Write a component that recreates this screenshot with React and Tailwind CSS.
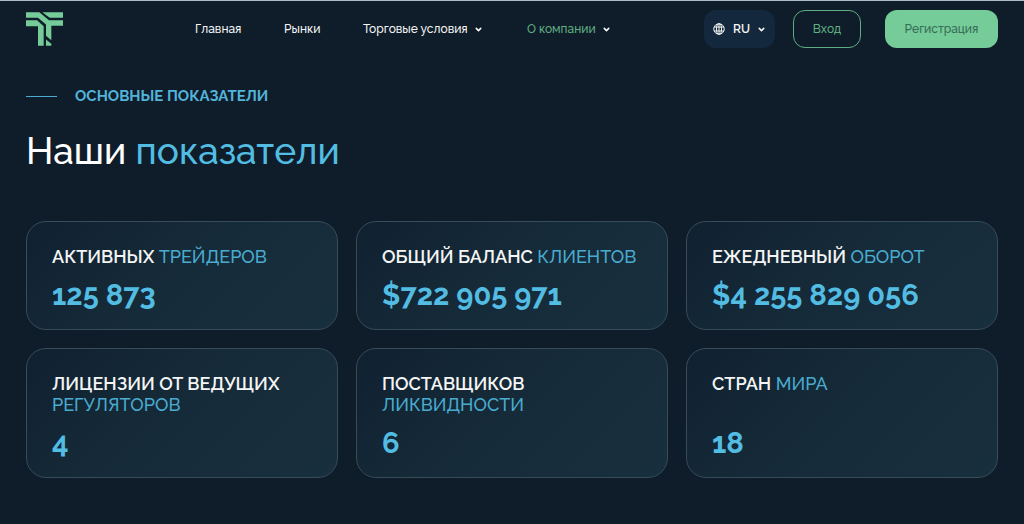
import React from 'react';
import { ChevronDown } from 'lucide-react';

const navItems = [
  { label: 'Главная', width: 'w-[89px]' },
  { label: 'Рынки', width: 'w-[79px]' },
  { label: 'Торговые условия', width: 'w-[164px]', menu: true },
  { label: 'О компании', width: 'w-[84px]', menu: true, active: true },
];

const stats = [
  { title: 'АКТИВНЫХ', accent: 'ТРЕЙДЕРОВ', value: '125 873' },
  { title: 'ОБЩИЙ БАЛАНС', accent: 'КЛИЕНТОВ', value: '$722 905 971' },
  { title: 'ЕЖЕДНЕВНЫЙ', accent: 'ОБОРОТ', value: '$4 255 829 056' },
  { title: 'ЛИЦЕНЗИИ ОТ ВЕДУЩИХ', accent: 'РЕГУЛЯТОРОВ', value: '4', stacked: true },
  { title: 'ПОСТАВЩИКОВ', accent: 'ЛИКВИДНОСТИ', value: '6', stacked: true },
  { title: 'СТРАН', accent: 'МИРА', value: '18' },
];

const Logo = () => (
  <svg viewBox="0 0 111 101" className="h-[34px] w-[37px]" fill="#75cc98" aria-hidden="true">
    <path d="M49 0H111V17H71Z" />
    <path d="M0 0H40L69 24H111V41H76V84L60 71V37L36 17H0Z" />
    <path d="M0 24H33L53 42V101H36V42H0Z" />
    <path d="M60 82L76 95V101H60Z" />
  </svg>
);

const Globe = () => (
  <svg viewBox="0 0 24 24" className="h-3 w-3" fill="none" stroke="currentColor" strokeWidth="2" aria-hidden="true">
    <circle cx="12" cy="12" r="10.5" />
    <ellipse cx="12" cy="12" rx="5" ry="10.5" />
    <path d="M12 1.5v21M2.5 8h19M2.5 16h19" />
  </svg>
);

const Header = () => (
  <header className="flex items-center border-t border-[#a9bcc4] px-[26px] pt-[9px]">
    <a href="#home" aria-label="Главная страница" className="mr-[132px]">
      <Logo />
    </a>

    <nav className="flex items-center text-[12px] leading-5 font-medium">
      {navItems.map((item) => (
        <div key={item.label} className={`${item.width} shrink-0 whitespace-nowrap`}>
          {item.menu ? (
            <button type="button" className="flex items-center gap-[6px]">
              <span className={item.active ? 'text-[#5fae82]' : 'text-[#f4f5f5]'}>{item.label}</span>
              <ChevronDown className="h-[9px] w-[9px] text-white" strokeWidth={4} />
            </button>
          ) : (
            <a href="#section" className="text-[#f4f5f5]">{item.label}</a>
          )}
        </div>
      ))}
    </nav>

    <div className="ml-auto flex items-center text-[12px] leading-5 font-medium">
      <label className="mr-[18px] flex h-[38px] w-[71px] items-center rounded-xl bg-[#14283d] pl-[9px] text-[#f4f5f5]">
        <Globe />
        <select aria-label="Язык" className="mr-[6px] ml-2 w-[18px] appearance-none bg-transparent font-semibold">
          <option>RU</option>
        </select>
        <ChevronDown className="h-[9px] w-[9px]" strokeWidth={4} />
      </label>
      <button type="button" className="mr-6 h-[38px] w-[68px] rounded-xl border border-[#5fae82] text-[#5fae82]">
        Вход
      </button>
      <button type="button" className="h-[38px] w-[113px] rounded-xl bg-[#75cc98] text-[#356b57]">
        Регистрация
      </button>
    </div>
  </header>
);

const StatCard = ({ title, accent, value, stacked }) => (
  <article className="flex flex-col justify-between rounded-[20px] border border-[#374b59] bg-linear-[135deg] from-[#102130] via-[#162b39] via-50% to-[#182f3e] px-[25px] pt-6 pb-[14px]">
    <h3 className="text-[18px] leading-[21px] font-semibold whitespace-nowrap text-[#f4f5f5]">
      {title}
      {stacked ? <br /> : ' '}
      <span className="font-medium text-[#49abd0]">{accent}</span>
    </h3>
    <p className="mt-2 text-[29px] leading-10 font-bold text-[#52bce2]">{value}</p>
  </article>
);

const App = () => (
  <div className="min-h-screen bg-[#0f1c29] font-['Raleway','Lato',sans-serif]">
    <Header />
    <main className="px-[26px] pb-[46px]">
      <div className="mt-9 flex items-center gap-[18px]">
        <span className="h-px w-[31px] bg-[#49abd0]" />
        <p className="text-[15px] leading-6 font-bold text-[#52b4da]">ОСНОВНЫЕ ПОКАЗАТЕЛИ</p>
      </div>
      <h1 className="mt-5 text-[37px] leading-[46px] font-medium text-white">
        Наши <span className="text-[#52bce2]">показатели</span>
      </h1>
      <section className="mt-[47px] grid grid-cols-3 gap-[18px]">
        {stats.map((stat) => (
          <StatCard key={stat.title} {...stat} />
        ))}
      </section>
    </main>
  </div>
);

export default App;
